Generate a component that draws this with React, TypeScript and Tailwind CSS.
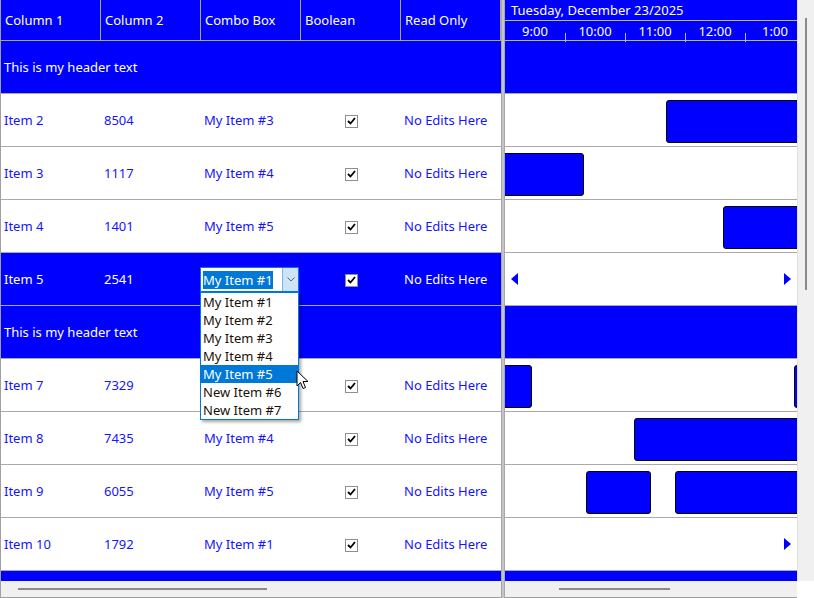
import React from 'react'

type Row =
  | { kind: 'group'; text: string }
  | { kind: 'item'; name: string; num: string; combo: string; selected?: boolean; hideCombo?: boolean }

const rows: Row[] = [
  { kind: 'group', text: 'This is my header text' },
  { kind: 'item', name: 'Item 2', num: '8504', combo: 'My Item #3' },
  { kind: 'item', name: 'Item 3', num: '1117', combo: 'My Item #4' },
  { kind: 'item', name: 'Item 4', num: '1401', combo: 'My Item #5' },
  { kind: 'item', name: 'Item 5', num: '2541', combo: 'My Item #1', selected: true },
  { kind: 'group', text: 'This is my header text' },
  { kind: 'item', name: 'Item 7', num: '7329', combo: 'My Item #3', hideCombo: true },
  { kind: 'item', name: 'Item 8', num: '7435', combo: 'My Item #4' },
  { kind: 'item', name: 'Item 9', num: '6055', combo: 'My Item #5' },
  { kind: 'item', name: 'Item 10', num: '1792', combo: 'My Item #1' },
]

// bar positions in px from the left edge of the timeline
const bars: { left: number; width: number }[][] = [
  [],
  [{ left: 161, width: 200 }],
  [{ left: -10, width: 89 }],
  [{ left: 218, width: 200 }],
  [],
  [],
  [{ left: -10, width: 37 }, { left: 289, width: 100 }],
  [{ left: 129, width: 200 }],
  [{ left: 81, width: 65 }, { left: 170, width: 200 }],
  [],
]

const arrows: { left?: boolean; right?: boolean }[] = [
  {}, {}, {}, {}, { left: true, right: true }, {}, {}, {}, {}, { right: true },
]

const comboItems = ['My Item #1', 'My Item #2', 'My Item #3', 'My Item #4', 'My Item #5', 'New Item #6', 'New Item #7']

const Check = () => (
  <div className="w-[13px] h-[13px] bg-white border border-[#8f8f8f] flex items-center justify-center">
    <svg width="9" height="8" viewBox="0 0 9 8">
      <path d="M1 4 L3.5 6.5 L8 1" stroke="#000" strokeWidth="1.8" fill="none" />
    </svg>
  </div>
)

const HeaderCell = ({ label }: { label: string }) => (
  <div className="w-[100px] h-full border-r border-[#aca899] flex items-center pl-[4px] pt-[2px]">{label}</div>
)

const GridRow = ({ row }: { row: Row }) => {
  if (row.kind === 'group') {
    return (
      <div className="h-[53px] border-b border-[#aaaaaa] bg-[#0000ff] text-white flex items-center pl-[3px] pt-[2px]">
        {row.text}
      </div>
    )
  }
  const sel = row.selected
  return (
    <div
      className={
        sel
          ? 'h-[53px] border-b border-[#aaaaaa] bg-[#0000ff] text-white flex items-center pt-[2px]'
          : 'h-[53px] border-b border-[#aaaaaa] bg-white text-[#1414ff] flex items-center pt-[2px]'
      }
    >
      <div className="w-[100px] pl-[3px]">{row.name}</div>
      <div className="w-[100px] pl-[3px]">{row.num}</div>
      <div className="w-[100px] pl-[3px]">{sel || row.hideCombo ? '' : row.combo}</div>
      <div className="w-[100px] flex justify-center">
        <Check />
      </div>
      <div className="w-[100px] pl-[3px]">No Edits Here</div>
    </div>
  )
}

const Triangle = ({ dir }: { dir: 'left' | 'right' }) => (
  <svg width="7" height="12" viewBox="0 0 7 12">
    {dir === 'left' ? <path d="M7 0 L0 6 L7 12 Z" fill="#0000ff" /> : <path d="M0 0 L7 6 L0 12 Z" fill="#0000ff" />}
  </svg>
)

const TimelineRow = ({ i }: { i: number }) => {
  const row = rows[i]
  if (row.kind === 'group') {
    return <div className="h-[53px] border-b border-[#aaaaaa] bg-[#0000ff]" />
  }
  const a = arrows[i]
  return (
    <div className="h-[53px] border-b border-[#aaaaaa] bg-white relative flex items-center justify-between px-[6px]">
      {bars[i].map((b, k) => (
        <div
          key={k}
          className="absolute top-[6px] h-[43px] bg-[#0000ff] border-[1.5px] border-black rounded-[3px]"
          style={{ left: b.left, width: b.width }}
        />
      ))}
      <div>{a.left && <Triangle dir="left" />}</div>
      <div>{a.right && <Triangle dir="right" />}</div>
    </div>
  )
}

export default function App() {
  return (
    <div
      className="w-[814px] h-[598px] relative flex bg-white text-[13px] overflow-hidden"
      style={{ fontFamily: '"Noto Sans", "Open Sans", sans-serif' }}
    >
      {/* grid pane */}
      <div className="w-[501px] flex flex-col border-l border-b border-[#a0a0a0]">
        <div className="h-[41px] flex bg-[#0000ff] text-white border-b border-[#aca899] shrink-0">
          <HeaderCell label="Column 1" />
          <HeaderCell label="Column 2" />
          <HeaderCell label="Combo Box" />
          <HeaderCell label="Boolean" />
          <HeaderCell label="Read Only" />
        </div>
        {rows.map((r, i) => (
          <GridRow key={i} row={r} />
        ))}
        <div className="h-[10px] bg-[#0000ff] shrink-0" />
        <div className="flex-1 bg-[#f0f0f0] flex items-center pl-[17px]">
          <div className="w-[249px] h-[2px] bg-[#8a8a8a]" />
        </div>
      </div>

      {/* splitter */}
      <div className="w-[4px] bg-[#c4c4c4] border-x border-[#a8a8a8]" />

      {/* timeline pane */}
      <div className="w-[292px] flex flex-col border-b border-[#a0a0a0]">
        <div className="h-[41px] bg-[#0000ff] text-white shrink-0 flex flex-col border-b border-[#b8b8c8]">
          <div className="h-[21px] border-b border-[#b8b8c8] pl-[6px] pt-[2px] flex items-center">
            Tuesday, December 23/2025
          </div>
          <div className="flex-1 flex">
            {['9:00', '10:00', '11:00', '12:00', '1:00'].map((t, k) => (
              <div key={t} className="w-[60px] shrink-0 relative flex items-center justify-center pt-[1px]">
                {t}
                {k > 0 && <div className="absolute left-0 bottom-0 w-px h-[9px] bg-[#b8b8c8]" />}
              </div>
            ))}
          </div>
        </div>
        <div className="overflow-hidden">
          {rows.map((_, i) => (
            <TimelineRow key={i} i={i} />
          ))}
        </div>
        <div className="h-[10px] bg-[#0000ff] shrink-0" />
        <div className="flex-1 bg-[#f0f0f0] flex items-center pl-[54px]">
          <div className="w-[111px] h-[2px] bg-[#8a8a8a]" />
        </div>
      </div>

      {/* vertical scrollbar */}
      <div className="w-[17px] flex flex-col">
        <div className="h-[581px] bg-[#f0f0f0] border-l border-[#e0e0e0] pt-[18px] flex justify-center">
          <div className="w-[2px] h-[272px] bg-[#8a8a8a]" />
        </div>
        <div className="flex-1 bg-white" />
      </div>

      {/* combo editor */}
      <div className="absolute left-[200px] top-[267px] w-[99px] h-[25px] bg-white border border-[#0078d7] flex">
        <div className="flex-1 flex items-center pl-[2px]">
          <span className="bg-[#0078d7] text-white leading-[17px] pt-[1px]">My Item #1</span>
        </div>
        <div className="w-[16px] bg-[#cce4f7] border-l border-[#7eb4ea] flex items-center justify-center">
          <svg width="8" height="5" viewBox="0 0 8 5">
            <path d="M0.5 0.5 L4 4 L7.5 0.5" stroke="#606060" fill="none" />
          </svg>
        </div>
      </div>

      {/* dropdown list */}
      <div className="absolute left-[200px] top-[292px] w-[99px] h-[128px] bg-white border border-[#0078d7] shadow-[2px_2px_3px_rgba(0,0,0,0.35)] text-[#1a1208]">
        {comboItems.map((t) => (
          <div
            key={t}
            className={
              t === 'My Item #5'
                ? 'h-[18px] bg-[#0078d7] text-white pl-[2px] leading-[18px]'
                : 'h-[18px] pl-[2px] leading-[18px]'
            }
          >
            {t}
          </div>
        ))}
      </div>

      {/* mouse pointer */}
      <svg className="absolute left-[296px] top-[370px]" width="14" height="21" viewBox="0 0 14 21">
        <path d="M1 1 L1 16 L4.5 12.5 L7 18.5 L9.5 17.5 L7 11.5 L12 11.5 Z" fill="#fff" stroke="#000" strokeWidth="1" />
      </svg>
    </div>
  )
}
